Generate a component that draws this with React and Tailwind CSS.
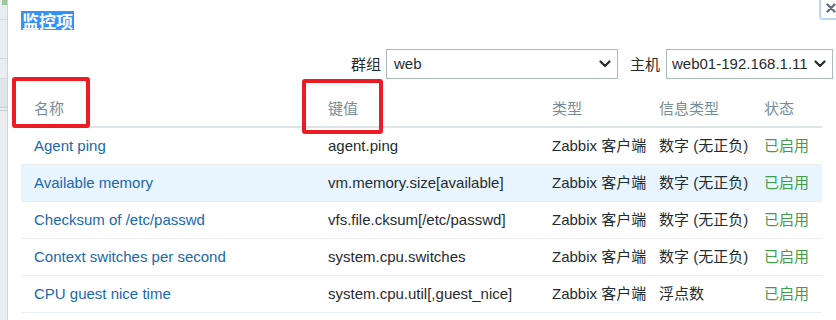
import React from "react";

const rows = [
  { name: "Agent ping", key: "agent.ping", type: "Zabbix 客户端", info: "数字 (无正负)" },
  { name: "Available memory", key: "vm.memory.size[available]", type: "Zabbix 客户端", info: "数字 (无正负)", hl: true },
  { name: "Checksum of /etc/passwd", key: "vfs.file.cksum[/etc/passwd]", type: "Zabbix 客户端", info: "数字 (无正负)" },
  { name: "Context switches per second", key: "system.cpu.switches", type: "Zabbix 客户端", info: "数字 (无正负)" },
  { name: "CPU guest nice time", key: "system.cpu.util[,guest_nice]", type: "Zabbix 客户端", info: "浮点数" },
];

function Chevron() {
  return (
    <svg width="12" height="8" viewBox="0 0 12 8" className="shrink-0">
      <polyline points="1.5,1.5 6,6 10.5,1.5" fill="none" stroke="#1f2c33" strokeWidth="2.2" strokeLinecap="round" strokeLinejoin="round" />
    </svg>
  );
}

function Select({ value, className }) {
  return (
    <div className={"h-[30px] border border-[#acbbc2] bg-white flex items-center justify-between pr-[6px] text-[#1f2c33] text-[15px] " + className}>
      <span>{value}</span>
      <Chevron />
    </div>
  );
}

export default function App() {
  return (
    <div
      className="relative w-[836px] h-[320px] overflow-hidden bg-white flex"
      style={{ fontFamily: '"Liberation Sans", Arial, "Noto Sans CJK SC", sans-serif' }}
    >
      {/* background page strip */}
      <div className="w-[8px] shrink-0 bg-[#e9edf0] border-r border-[#cbd3d8] flex flex-col">
        <div className="h-[6px] flex justify-end">
          <div className="w-[5px] h-[5px] bg-[#9cc79c]" />
        </div>
        <div className="h-[13px]" />
        <div className="h-px bg-[#d3d9dd]" />
        <div className="h-[38px]" />
        <div className="h-px bg-[#d3d9dd]" />
        <div className="h-[19px]" />
        <div className="h-[29px] bg-[#dfe5e9] border-t border-[#d3d9dd]" />
        <div className="h-px bg-[#c6ced3]" />
        <div className="h-[2px]" />
        <div className="h-px bg-[#c6ced3]" />
      </div>

      {/* modal */}
      <div className="flex-1 flex flex-col pl-[13px] pt-[11px]">
        <div className="h-[19px] flex">
          <span
            className="bg-[#3390ff] text-white text-[17px] leading-[19px] font-bold px-px"
            style={{ fontFamily: '"Noto Sans CJK SC", sans-serif' }}
          >
            监控项
          </span>
        </div>

        <div className="mt-[19px] flex items-center justify-end pr-[3px] text-[15px] text-[#1f2c33]">
          <span className="mr-[5px]" style={{ fontFamily: '"Noto Sans CJK SC", sans-serif' }}>群组</span>
          <Select value="web" className="w-[232px] pl-[7px]" />
          <span className="ml-[12px] mr-[6px]" style={{ fontFamily: '"Noto Sans CJK SC", sans-serif' }}>主机</span>
          <Select value="web01-192.168.1.11" className="w-[167px] pl-[5px]" />
        </div>

        <div className="w-[801px] text-[15px]">
          <div className="h-[49px] flex items-end pb-[9px] border-b-2 border-[#dfe4e7] text-[#768d99] leading-[17px]">
            <div className="w-[307px] pl-[13px]">名称</div>
            <div className="w-[224px]">键值</div>
            <div className="w-[107px]">类型</div>
            <div className="w-[105px]">信息类型</div>
            <div className="flex-1">状态</div>
          </div>
          {rows.map((r) => (
            <div
              key={r.name}
              className={"h-[37px] flex items-center border-b border-[#ebeef0] " + (r.hl ? "bg-[#e8f5ff]" : "")}
            >
              <div className="w-[307px] pl-[13px] text-[#1a68ad]">{r.name}</div>
              <div className="w-[224px] text-[#1f2c33]">{r.key}</div>
              <div className="w-[107px] text-[#1f2c33]">{r.type}</div>
              <div className="w-[105px] text-[#1f2c33]">{r.info}</div>
              <div className="flex-1 text-[#429e47]">已启用</div>
            </div>
          ))}
        </div>
      </div>

      {/* close button */}
      <div className="absolute left-[819px] top-[-4px] w-[24px] h-[24px] rounded-[4px] border-2 border-[#bcd9f3] bg-white flex items-center pl-[5px]">
        <svg width="10" height="10" viewBox="0 0 10 10">
          <path d="M1.5 1.5 L8.5 8.5 M8.5 1.5 L1.5 8.5" stroke="#5f6f7d" strokeWidth="2.4" strokeLinecap="round" />
        </svg>
      </div>

      {/* red annotation boxes */}
      <div className="absolute left-[12px] top-[77px] w-[78px] h-[51px] border-4 border-[#ec1c24] rounded-[3px]" />
      <div className="absolute left-[302px] top-[79px] w-[81px] h-[55px] border-4 border-[#ec1c24] rounded-[3px]" />
    </div>
  );
}
